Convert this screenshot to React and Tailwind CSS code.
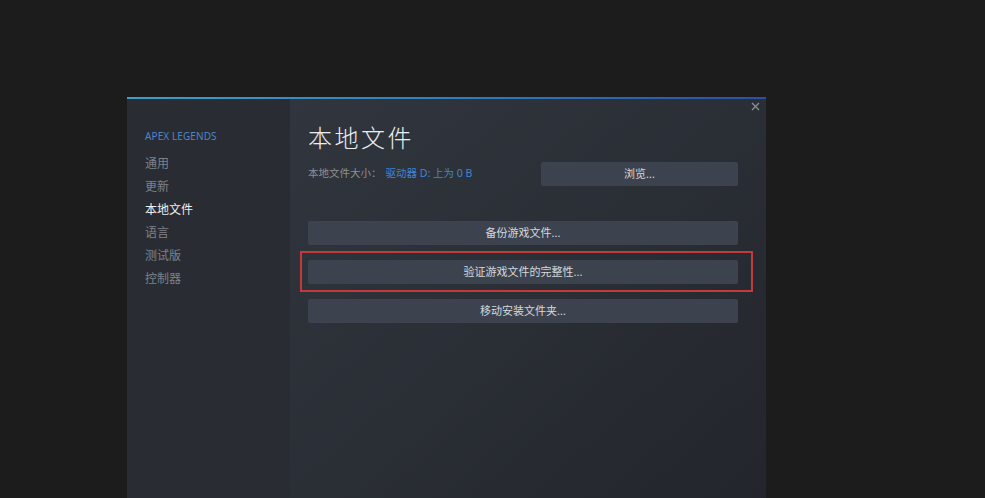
import React from 'react';

const navItems = ['通用', '更新', '本地文件', '语言', '测试版', '控制器'];

const ActionButton = ({ children, className = '' }) => (
  <button
    className={`w-full h-[24px] rounded-[2px] bg-[#3d434e] text-[11px] text-[#d6d9dc] flex items-center justify-center ${className}`}
  >
    {children}
  </button>
);

export default function App() {
  return (
    <div
      className="w-[985px] h-[498px] overflow-hidden bg-[#1c1c1d] pt-[97px] pl-[127px]"
      style={{ fontFamily: "'Noto Sans', 'Noto Sans CJK SC', sans-serif" }}
    >
      <div className="w-[639px] h-[420px] flex flex-col">
        {/* top accent line */}
        <div className="h-[2px] bg-gradient-to-r from-[#3aa0c8] via-[#2f7fc0] to-[#2a4fa8]" />

        <div className="flex flex-1">
          {/* Sidebar */}
          <div className="w-[163px] bg-[#292c33] pl-[18px] pt-[30px]">
            <div className="text-[10px] leading-[14px] text-[#4a86c8] tracking-[0.1px]">
              APEX LEGENDS
            </div>
            <ul className="mt-[9px] flex flex-col">
              {navItems.map((item) => (
                <li
                  key={item}
                  className={`h-[23px] leading-[23px] text-[12px] ${
                    item === '本地文件' ? 'text-[#eef0f2]' : 'text-[#7d838b]'
                  }`}
                >
                  {item}
                </li>
              ))}
            </ul>
          </div>

          {/* Content */}
          <div className="relative flex-1 bg-gradient-to-br from-[#31353d] via-[#2a2e35] to-[#22252b] pl-[18px] pr-[28px] pt-[24px]">
            {/* close */}
            <button className="absolute right-[4px] top-[0px] w-[14px] h-[14px] flex items-center justify-center text-[#8a8f96]">
              <svg width="9" height="9" viewBox="0 0 9 9" fill="none">
                <path d="M1 1L8 8M8 1L1 8" stroke="currentColor" strokeWidth="1.3" />
              </svg>
            </button>

            <h1 className="text-[24px] leading-[30px] text-[#eceef0] tracking-[2.5px] font-light">
              本地文件
            </h1>

            <div className="mt-[9px] flex items-center">
              <span className="text-[10.5px] text-[#8b9097]">本地文件大小：</span>
              <span className="ml-[4px] text-[10.5px] text-[#3f86d4]">驱动器 D: 上为 0 B</span>
              <button className="ml-auto w-[197px] h-[24px] rounded-[2px] bg-[#3d434e] text-[11px] text-[#d6d9dc]">
                浏览...
              </button>
            </div>

            <div className="mt-[35px] flex flex-col gap-[15px]">
              <ActionButton>备份游戏文件...</ActionButton>
              <div className="relative">
                <ActionButton>验证游戏文件的完整性...</ActionButton>
                <div className="absolute -left-[8px] -right-[15px] -top-[9px] -bottom-[8px] border-2 border-[#c23a3a] pointer-events-none" />
              </div>
              <ActionButton>移动安装文件夹...</ActionButton>
            </div>
          </div>
        </div>
      </div>
    </div>
  );
}
